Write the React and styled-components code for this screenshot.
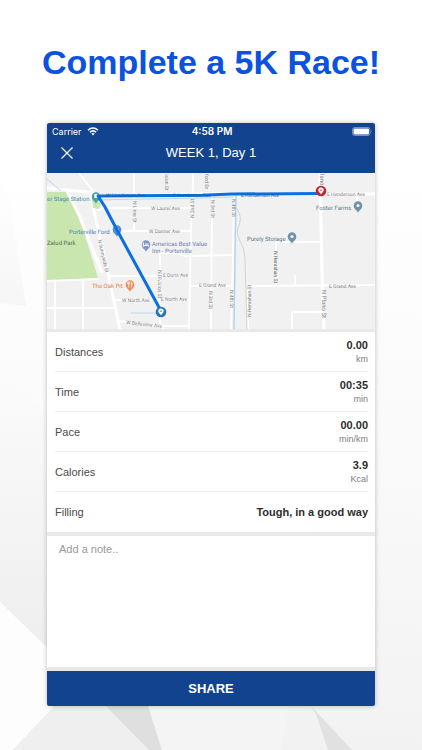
import styled, { createGlobalStyle } from "styled-components";

const stats = [
  { label: "Distances", value: "0.00", unit: "km" },
  { label: "Time", value: "00:35", unit: "min" },
  { label: "Pace", value: "00.00", unit: "min/km" },
  { label: "Calories", value: "3.9", unit: "Kcal" },
  { label: "Filling", value: "Tough, in a good way" },
];

const minorRoads = [
  "M32 0 L46 18",
  "M87 0 V58",
  "M146 0 L146 10 L144 55 L142 157",
  "M165 20 L164 157",
  "M187 24 L186 82 L184 157",
  "M50 38 L56 35 H145",
  "M64 58 H145",
  "M113 80 V150 L117 157",
  "M63 103 H143",
  "M113 80 L128 80 L138 83 L185 82",
  "M66 127 H143",
  "M143 113 H185",
  "M72 148 L110 153 H143",
  "M0 108 L51 106",
  "M0 135 H70",
  "M8 109 V157 M36 107 V157",
  "M201 157 V115 Q201 113 204 113 L328 112",
  "M229 69 H274",
  "M229 69 V112 M248 102 V112",
  "M245 157 V141 Q245 139 248 139 H276",
  "M310 20 V30",
];

const majorRoads = [
  "M0 15 L40 19 L55 23 L155 21 L328 21",
  "M20 18 L32 42 L55 100",
  "M43 18 L47 38 L60 95 L73 157",
  "M273 0 L275 100 L277 157",
];

const roadNames = [
  { x: 280, y: 23, text: "E Henderson Ave" },
  { x: 104, y: 37, text: "W Laurel Ave" },
  { x: 102, y: 60, text: "W Danner Ave" },
  { x: 116, y: 104, text: "E Doris Ave" },
  { x: 152, y: 114, text: "E Grand Ave" },
  { x: 282, y: 115, text: "E Grand Ave" },
  { x: 75, y: 129, text: "W North Ave" },
  { x: 114, y: 128, text: "E North Ave" },
  { x: 79, y: 151, text: "W Belleview Ave", angle: 6 },
  { x: 86, y: 28, text: "N Lime St", angle: 90 },
  { x: 51, y: 67, text: "N Sunnyside St", angle: 77 },
  { x: 118, y: 1, text: "ision St", angle: 90 },
  { x: 158, y: 1, text: "ford Dr", angle: 90 },
  { x: 147, y: 45, text: "N 2nd St", angle: 270 },
  { x: 164, y: 27, text: "N 3rd St", angle: 90 },
  { x: 185, y: 26, text: "N 4th St", angle: 90 },
  { x: 111, y: 97, text: "N Division St", angle: 90 },
  { x: 162, y: 118, text: "N 3rd St", angle: 90 },
  { x: 183, y: 117, text: "N 4th St", angle: 90 },
  { x: 204, y: 144, text: "N Henrahan St", angle: 270 },
  { x: 227, y: 78, text: "N Henrahan St", angle: 90, dark: true },
  { x: 273, y: 1, text: "lano", angle: 90, large: true },
  { x: 275, y: 117, text: "N Plano St", angle: 90, large: true },
];

const routeRoadNames = [
  { x: 59, text: "W Henderson Ave" },
  { x: 126, text: "E Henderson Ave" },
  { x: 194, text: "E Henderson Ave" },
];

const places = [
  { x: 0, y: 28, text: "er Stage Station", color: "#4790ad" },
  { x: 22, y: 61, text: "Porterville Ford", color: "#4a7ab8" },
  { x: 0, y: 72, text: "Zalud Park", color: "#566b5a" },
  { x: 105, y: 73, text: "Americas Best Value", color: "#6a7bb0" },
  { x: 105, y: 80, text: "Inn - Porterville", color: "#6a7bb0" },
  { x: 45, y: 115, text: "The Oak Pit", color: "#e07f4d" },
  { x: 200, y: 68, text: "Purely Storage", color: "#5d7789" },
  { x: 269, y: 37, text: "Foster Farms", color: "#5d7789" },
];

function MapPin({ x, y, color, children }) {
  return (
    <g transform={`translate(${x} ${y})`}>
      <path
        d="M0 7 C-.5 4.5 -4.3 3.3 -4.3 -.5 A4.3 4.3 0 0 1 4.3 -.5 C4.3 3.3 .5 4.5 0 7Z"
        fill={color}
      />
      {children || <circle cy="-.5" r="1.6" fill="#f2f4f5" />}
    </g>
  );
}

function RouteMarker({ x, y, color }) {
  return (
    <g transform={`translate(${x} ${y})`}>
      <circle r="5.3" fill={color} />
      <path
        d="M0 3.6 C-.4 1.8 -2.7 1.2 -2.7 -.8 A2.7 2.7 0 0 1 2.7 -.8 C2.7 1.2 .4 1.8 0 3.6Z"
        fill="#fff"
      />
      <circle cy="-.8" r=".8" fill={color} />
    </g>
  );
}

function RouteMap() {
  return (
    <StyledMap
      viewBox="0 0 328 156"
      preserveAspectRatio="xMidYMid slice"
      role="img"
      aria-label="Route map"
    >
      <rect width="328" height="156" fill="#f1f1f1" />
      <path d="M0 19 L21 19 L32 43 L51 105 L0 108Z" fill="#c9e6ae" />
      <g fill="none" stroke="#fff">
        {minorRoads.map((road) => (
          <path key={road} d={road} strokeWidth="1.8" />
        ))}
        {majorRoads.map((road) => (
          <path key={road} d={road} strokeWidth="3" />
        ))}
      </g>
      <path
        d="M0 6 L14 18 M45 27 L155 25 L187 24 M84 140 H112"
        fill="none"
        stroke="#b5d9f0"
        strokeWidth="1"
      />
      <path
        d="M189 22 L188 85 L187 156"
        fill="none"
        stroke="#aed3f0"
        strokeWidth="1.4"
      />
      <path
        d="M188 33 C195 42 194 48 191 55 C188 66 198 70 198 87 L200 156"
        fill="none"
        stroke="#c1d2bd"
        strokeWidth=".8"
      />
      <path d="M45 25 L54 30 L52 36 L46 35Z" fill="#c9e6ae" />
      {roadNames.map(({ x, y, text, angle = 0, dark, large }) => (
        <StyledRoadName
          key={`${text}-${x}-${y}`}
          transform={`translate(${x} ${y}) rotate(${angle})`}
          $dark={dark}
          $large={large}
        >
          {text}
        </StyledRoadName>
      ))}
      {places.map(({ x, y, text, color }) => (
        <StyledPlaceName key={text} x={x} y={y} fill={color}>
          {text}
        </StyledPlaceName>
      ))}

      <MapPin x={49} y={24} color="#45a3a4">
        <path d="M-1.6 -3 H1.6 V1 H-1.6Z M-1 2 H1" fill="#fff" />
      </MapPin>
      <MapPin x={70} y={57} color="#4d8bd6" />
      <MapPin x={99} y={72} color="#8494cb">
        <path
          d="M-2.7 -2.5 V1.5 M-2.7 .5 H2.7 V1.5 M-1 -1 H2.5"
          stroke="#fff"
          fill="none"
        />
      </MapPin>
      <MapPin x={83} y={112} color="#ed8c59">
        <path
          d="M-1.3 -3.5 V2.5 M-2.3 -3.5 V-1 H-.3 V-3.5 M1.5 2.5 V-3 Q2.5 -2 2 0"
          stroke="#fff"
          strokeWidth=".7"
          fill="none"
        />
      </MapPin>
      <MapPin x={245} y={64} color="#6f91a6" />
      <MapPin x={311} y={33} color="#6f91a6" />

      <path
        d="M274 20.5 L185 21 L155 22.3 L51 23 L58 34 L70 57 L114 138"
        fill="none"
        stroke="#0c6fe0"
        strokeWidth="3"
        strokeLinejoin="round"
      />
      {routeRoadNames.map(({ x, text }) => (
        <StyledRoadName key={x} x={x} y={24} $onRoute>
          {text}
        </StyledRoadName>
      ))}
      <RouteMarker x={274} y={18} color="#c7252c" />
      <RouteMarker x={114} y={139} color="#2175b5" />
    </StyledMap>
  );
}

function Backdrop() {
  return (
    <StyledBackdrop viewBox="0 0 422 750" preserveAspectRatio="none" aria-hidden="true">
      <defs>
        <linearGradient id="page-shade" x1="0" y1="0" x2="0" y2="1">
          <stop offset=".2" stopColor="#fff" />
          <stop offset=".65" stopColor="#f9f9f9" />
          <stop offset="1" stopColor="#f2f2f2" />
        </linearGradient>
        <linearGradient id="facet-shade" x1="0" y1="0" x2="0" y2="1">
          <stop offset="0" stopColor="#fff" />
          <stop offset="1" stopColor="#f6f6f6" />
        </linearGradient>
        <linearGradient id="left-shade" x1="0" y1="0" x2="0" y2="1">
          <stop offset="0" stopColor="#fbfbfb" />
          <stop offset="1" stopColor="#eeeeee" />
        </linearGradient>
      </defs>
      <rect width="422" height="750" fill="url(#page-shade)" />
      <path d="M0 170 L12 215 L26 306 L0 303Z" fill="url(#facet-shade)" />
      <path d="M0 372 L50 418 V650 L0 602Z" fill="url(#left-shade)" />
      <path d="M0 602 L60 660 V700 L13 750 H0Z" fill="#fdfdfd" />
      <path d="M60 700 H102 L149 750 H13Z" fill="#efefef" />
      <path d="M102 702 H147 L162 750 H149Z" fill="#dfdfdf" />
      <path d="M147 702 H290 L281 750 H162Z" fill="#f4f4f4" />
      <path d="M290 702 H311 L328 750 H281Z" fill="#f2f2f2" />
      <path d="M311 706 L352 750 H328 L316 714Z" fill="#e1e1e1" />
    </StyledBackdrop>
  );
}

export default function App() {
  return (
    <>
      <GlobalStyle />
      <StyledPage>
        <Backdrop />
        <StyledTitle>Complete a 5K Race!</StyledTitle>

        <StyledScreen>
          <StyledHeader>
            <StyledStatusBar>
              <StyledCarrier>
                Carrier
                <svg width="12" height="9" viewBox="0 0 12 9" aria-hidden="true">
                  <path
                    d="M1 3.2 Q6 -1.2 11 3.2 M2.9 5.2 Q6 2.6 9.1 5.2"
                    fill="none"
                    stroke="#fff"
                    strokeWidth="1.5"
                  />
                  <path d="M4.3 6.6 Q6 5.3 7.7 6.6 L6 8.5Z" fill="#fff" />
                </svg>
              </StyledCarrier>
              <StyledClock>4:58 PM</StyledClock>
              <StyledBattery width="20" height="9" viewBox="0 0 20 9" aria-hidden="true">
                <rect
                  x=".5"
                  y=".5"
                  width="17.5"
                  height="8"
                  rx="2"
                  fill="none"
                  stroke="#8ba7d0"
                  strokeWidth=".8"
                />
                <rect x="1.5" y="1.5" width="15.5" height="6" rx="1" fill="#fff" />
                <path d="M18.8 3 Q20 4.5 18.8 6Z" fill="#8ba7d0" />
              </StyledBattery>
            </StyledStatusBar>
            <StyledNavBar>
              <StyledCloseButton type="button" aria-label="Close">
                <svg width="12" height="12" viewBox="0 0 12 12" aria-hidden="true">
                  <path
                    d="M.5 .5 L11.5 11.5 M11.5 .5 L.5 11.5"
                    stroke="#fff"
                    strokeWidth="1.1"
                  />
                </svg>
              </StyledCloseButton>
              <StyledHeading>WEEK 1, Day 1</StyledHeading>
            </StyledNavBar>
          </StyledHeader>

          <RouteMap />

          <StyledStats>
            {stats.map(({ label, value, unit }) => (
              <StyledStat key={label}>
                <StyledLabel>{label}</StyledLabel>
                <StyledResult>
                  <StyledValue>{value}</StyledValue>
                  {unit && <StyledUnit>{unit}</StyledUnit>}
                </StyledResult>
              </StyledStat>
            ))}
          </StyledStats>

          <StyledNote placeholder="Add a note.." aria-label="Add a note" />
          <StyledShareButton type="button">SHARE</StyledShareButton>
        </StyledScreen>
      </StyledPage>
    </>
  );
}

const GlobalStyle = createGlobalStyle`
  * {
    box-sizing: border-box;
  }
  body {
    margin: 0;
    font-family: "Liberation Sans", Arial, sans-serif;
  }
`;

const StyledPage = styled.main`
  position: relative;
  min-height: 100vh;
  padding: 42px 47px 44px;
  overflow: hidden;
`;

const StyledBackdrop = styled.svg`
  position: absolute;
  inset: 0;
  z-index: -1;
  width: 100%;
  height: 100%;
`;

const StyledTitle = styled.h1`
  margin: 0 -20px 41px;
  color: #0b53df;
  font-size: 34px;
  line-height: 40px;
  text-align: center;
`;

const StyledScreen = styled.section`
  display: flex;
  flex-direction: column;
  overflow: hidden;
  background: #fff;
  border-radius: 2px;
  box-shadow: 0 0 5px rgba(0, 0, 0, 0.25);
`;

const StyledHeader = styled.header`
  padding-bottom: 7px;
  background: #12438f;
  color: #fff;
`;

const StyledStatusBar = styled.div`
  display: grid;
  grid-template-columns: 1fr auto 1fr;
  align-items: center;
  height: 16px;
  padding: 0 3px 0 5px;
  font-family: Inter, sans-serif;
  font-size: 9px;
`;

const StyledCarrier = styled.span`
  display: flex;
  align-items: center;
  gap: 5px;
`;

const StyledClock = styled.span`
  font-size: 10px;
  font-weight: 600;
`;

const StyledBattery = styled.svg`
  justify-self: end;
`;

const StyledNavBar = styled.div`
  display: grid;
  grid-template-columns: 40px 1fr 40px;
  align-items: center;
  height: 27px;
`;

const StyledCloseButton = styled.button`
  display: flex;
  align-items: center;
  justify-content: center;
  height: 27px;
  padding: 0;
  background: none;
  border: none;
  cursor: pointer;
`;

const StyledHeading = styled.h2`
  margin: 0;
  font-size: 13px;
  font-weight: 400;
  line-height: 27px;
  text-align: center;
`;

const StyledMap = styled.svg`
  display: block;
  width: 100%;
  height: 156px;
`;

const roadNameColor = ({ $dark, $onRoute }) => {
  if ($onRoute) return "#1458ae";
  return $dark ? "#555" : "#808080";
};

const StyledRoadName = styled.text`
  fill: ${roadNameColor};
  font-family: Roboto, sans-serif;
  font-size: ${({ $large }) => ($large ? "6px" : "5px")};
  text-rendering: geometricPrecision;
`;

const StyledPlaceName = styled.text`
  font-family: Roboto, sans-serif;
  font-size: 6px;
  text-rendering: geometricPrecision;
`;

const StyledStats = styled.dl`
  margin: 0;
  padding: 0 7px 0 8px;
  border-top: 3px solid #e9e9e9;
  border-bottom: 4px solid #e9e9e9;
`;

const StyledStat = styled.div`
  display: flex;
  align-items: center;
  justify-content: space-between;
  height: 40px;
  border-bottom: 1px solid #f1f1f1;

  &:last-child {
    border-bottom: none;
  }
`;

const StyledLabel = styled.dt`
  color: #4a4a4a;
  font-size: 11px;
  line-height: 14px;
`;

const StyledResult = styled.dd`
  display: flex;
  flex-direction: column;
  margin: 0;
  text-align: right;
`;

const StyledValue = styled.span`
  color: #2d2d2d;
  font-size: 11px;
  font-weight: 700;
  line-height: 14px;
`;

const StyledUnit = styled.span`
  color: #7d7d7d;
  font-size: 9px;
  line-height: 14px;
`;

const StyledNote = styled.textarea`
  display: block;
  width: 100%;
  height: 131px;
  padding: 6px 12px;
  background: #fff;
  border: none;
  outline: none;
  resize: none;
  color: #4a4a4a;
  font-family: inherit;
  font-size: 11px;
  line-height: 14px;

  &::placeholder {
    color: #999;
  }
`;

const StyledShareButton = styled.button`
  height: 39px;
  padding: 0;
  background: #12438f;
  border: none;
  border-top: 4px solid #e9e9e9;
  color: #fff;
  font-family: inherit;
  font-size: 13px;
  font-weight: 700;
  cursor: pointer;
`;
